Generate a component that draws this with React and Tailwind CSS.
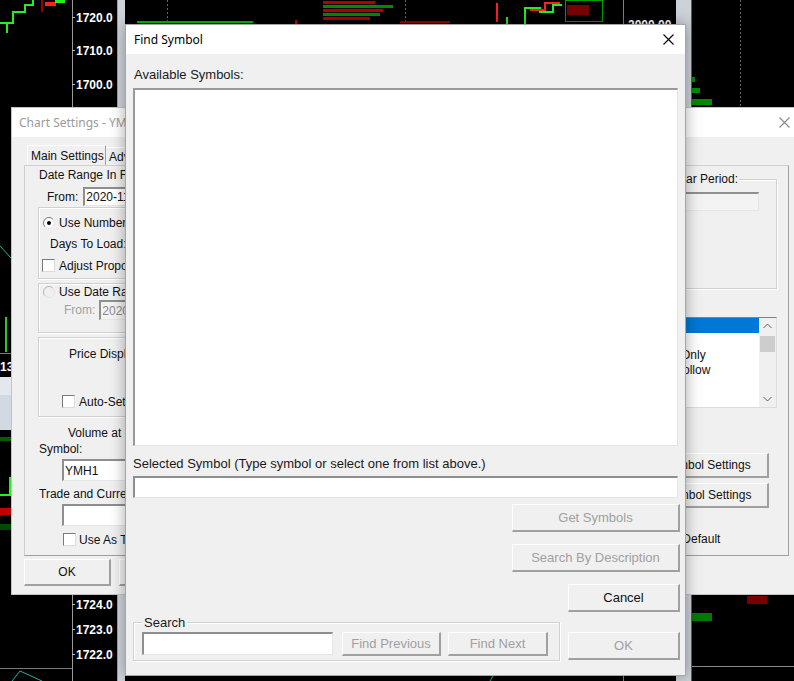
import React from 'react';

const ui = "font-['Liberation_Sans',Arial,sans-serif]";
const caption = "font-['Noto_Sans','Liberation_Sans',sans-serif]";

function CloseX({ color = '#000' }) {
  return (
    <svg width="11" height="11" viewBox="0 0 11 11">
      <path d="M0.5 0.5 L10.5 10.5 M10.5 0.5 L0.5 10.5" stroke={color} strokeWidth="1.1" />
    </svg>
  );
}

function Button({ children, disabled, className = '' }) {
  return (
    <div
      className={`flex items-center justify-center bg-[#f0f0f0] border-t border-l border-t-white border-l-white border-r-2 border-b-2 border-r-[#a0a0a0] border-b-[#a0a0a0] ${
        disabled ? 'text-[#a0a0a0]' : 'text-[#111]'
      } ${className}`}
    >
      {children}
    </div>
  );
}

function Field({ children, disabled, className = '' }) {
  return (
    <div
      className={`flex items-center border-t-2 border-l-2 border-t-[#8f8f8f] border-l-[#8f8f8f] border-r border-b border-r-[#e6e6e6] border-b-[#e6e6e6] ${
        disabled ? 'bg-[#f3f3f3]' : 'bg-white'
      } ${className}`}
    >
      {children}
    </div>
  );
}

function Group({ children, className = '' }) {
  return (
    <div className={`border border-[#d0d0d0] shadow-[inset_1px_1px_0_#fff,1px_1px_0_#fff] ${className}`}>
      {children}
    </div>
  );
}

function Check() {
  return (
    <span className="inline-block w-[13px] h-[13px] shrink-0 bg-white border border-t-[#7a7a7a] border-l-[#7a7a7a] border-r-[#dcdcdc] border-b-[#dcdcdc]" />
  );
}

function Radio({ checked, disabled }) {
  return (
    <svg width="12" height="12" viewBox="0 0 12 12" className="shrink-0">
      <circle cx="6" cy="6" r="5.5" fill={disabled ? '#f0f0f0' : '#fff'} />
      <path d="M2.1 9.9 A5.5 5.5 0 0 1 9.9 2.1" stroke={disabled ? '#b5b5b5' : '#7a7a7a'} fill="none" />
      <path d="M9.9 2.1 A5.5 5.5 0 0 1 2.1 9.9" stroke="#e3e3e3" fill="none" />
      {checked && <circle cx="6" cy="6" r="2" fill="#000" />}
    </svg>
  );
}

function ChartBackdrop() {
  const scale = [
    [17, '1720.0'],
    [50, '1710.0'],
    [84, '1700.0'],
    [604, '1724.0'],
    [629, '1723.0'],
    [654, '1722.0'],
  ];
  const profile = [
    [1, 52, '#b00000'],
    [5, 70, '#008a00'],
    [9, 60, '#b00000'],
    [13, 57, '#008a00'],
    [17, 47, '#b00000'],
  ];
  return (
    <svg className="absolute inset-0" width="794" height="681" viewBox="0 0 794 681">
      <rect width="794" height="681" fill="#000" />

      {/* left pane price scale */}
      <line x1="72.5" y1="0" x2="72.5" y2="681" stroke="#9a9a9a" />
      {scale.map(([y, t]) => (
        <g key={t}>
          <line x1="72" y1={y + 0.5} x2="75" y2={y + 0.5} stroke="#bdbdbd" />
          <text x="76" y={y + 4.5} fill="#fff" fontSize="12" fontWeight="700" fontFamily="Liberation Sans, Arial, sans-serif">
            {t}
          </text>
        </g>
      ))}
      <line x1="0" y1="668.5" x2="72" y2="668.5" stroke="#7a7a7a" />

      {/* left pane bars */}
      <polyline points="0,23 13,23 13,12 25,12 25,5 33,5 33,0" stroke="#22ee22" strokeWidth="2" fill="none" />
      <line x1="7" y1="22" x2="7" y2="33" stroke="#22ee22" strokeWidth="2" />
      <line x1="42" y1="0" x2="42" y2="12" stroke="#9a0000" strokeWidth="2" />
      <rect x="45" y="2" width="11" height="4" fill="#ff2020" />
      <rect x="55" y="0" width="10" height="3" fill="#22ee22" />
      <polyline points="0,246 11,258" stroke="#20b0a0" fill="none" />
      <line x1="6" y1="317" x2="6" y2="352" stroke="#22cc22" strokeWidth="2" />
      <line x1="0" y1="353.5" x2="11" y2="353.5" stroke="#7a7a7a" />
      <text x="0" y="371" fill="#fff" fontSize="12" fontWeight="700" fontFamily="Liberation Sans, Arial, sans-serif">13</text>
      <rect x="0" y="377" width="11" height="18" fill="#e4e7ec" />
      <rect x="0" y="395" width="11" height="35" fill="#d3d9e3" />
      <rect x="0" y="437" width="11" height="4" fill="#006000" />
      <polyline points="0,495 10,495 10,478 11,478" stroke="#22ee22" strokeWidth="2" fill="none" />
      <rect x="0" y="508" width="11" height="7" fill="#c00000" />
      <rect x="0" y="524" width="11" height="6" fill="#004a00" />
      <polyline points="12,681 20,671 42,681" stroke="#20b0a0" fill="none" />

      {/* pane splitter */}
      <rect x="117" y="0" width="8" height="681" fill="#cfd4db" />
      <line x1="117.5" y1="0" x2="117.5" y2="681" stroke="#9aa0a8" />

      {/* middle pane, strip above the dialogs */}
      <line x1="137" y1="22" x2="253" y2="22" stroke="#00c000" strokeWidth="2" />
      <line x1="167.5" y1="0" x2="167.5" y2="24" stroke="#666" strokeDasharray="2 2" />
      <line x1="296" y1="20" x2="296" y2="24" stroke="#cc0000" strokeWidth="2" />
      {profile.map(([y, w, c]) => (
        <rect key={y} x="323" y={y} width={w} height="3" fill={c} />
      ))}
      <line x1="405.5" y1="0" x2="405.5" y2="24" stroke="#666" strokeDasharray="2 2" />
      <line x1="400" y1="22" x2="450" y2="22" stroke="#9a0000" strokeWidth="2" />
      <line x1="497" y1="3" x2="497" y2="22" stroke="#ff2020" strokeWidth="2" />
      <line x1="507" y1="17" x2="507" y2="24" stroke="#22ee22" strokeWidth="2" />
      <polyline points="525,24 525,8 540,8 540,12 553,12 553,5 562,5" stroke="#22ee22" strokeWidth="2" fill="none" />
      <polyline points="530,10 545,10 545,3 560,3" stroke="#ff2020" strokeWidth="2" fill="none" />
      <rect x="567" y="5" width="22" height="10" fill="#7a0000" />
      <rect x="565.5" y="0.5" width="37" height="21" stroke="#00a000" fill="none" />
      <line x1="623.5" y1="0" x2="623.5" y2="24" stroke="#808080" />
      <text x="628" y="29" fill="#fff" fontSize="12" fontWeight="700" fontFamily="Liberation Sans, Arial, sans-serif">2000.00</text>
      <line x1="493" y1="676" x2="490" y2="681" stroke="#20b0a0" />
      <line x1="623.5" y1="676" x2="623.5" y2="681" stroke="#808080" />

      {/* right pane */}
      <rect x="676" y="0" width="15" height="681" fill="#cdd2d9" />
      <line x1="691.5" y1="0" x2="691.5" y2="681" stroke="#5a5e64" />
      <line x1="740.5" y1="0" x2="740.5" y2="107" stroke="#666" strokeDasharray="2 2" />
      <rect x="692" y="77" width="3" height="5" fill="#008a00" />
      <rect x="692" y="88" width="8" height="5" fill="#008a00" />
      <rect x="692" y="99" width="20" height="6" fill="#008a00" />
      <rect x="747" y="596" width="20" height="8" fill="#7a0000" />
      <rect x="692" y="613" width="20" height="8" fill="#007a00" />
      <line x1="692" y1="666.5" x2="794" y2="666.5" stroke="#8a8a8a" />
    </svg>
  );
}

function ChartSettings() {
  return (
    <div className={`absolute left-[11px] top-[107px] w-[790px] h-[488px] flex flex-col bg-[#f0f0f0] border border-[#c4c4c4] text-[12px] text-[#111] ${ui}`}>
      <div className="h-[29px] shrink-0 bg-white flex items-center justify-between pl-[7px] pr-[10px]">
        <span className={`${caption} text-[12px] text-[#9a9a9a]`}>Chart Settings - YMH1 [M]  1 Min  #1</span>
        <CloseX color="#8a8a8a" />
      </div>

      <div className="flex items-end ml-[15px] mt-[8px] h-[20px]">
        <div className="h-[20px] w-[79px] flex items-center pl-[3px] border-t border-l border-r border-t-white border-l-white border-r-[#a0a0a0]">
          Main Settings
        </div>
        <div className="h-[18px] flex items-center pl-[3px] pr-[6px] border-t border-r border-t-white border-r-[#a0a0a0]">
          Advanced Settings
        </div>
      </div>

      <div className="ml-[12px] w-[765px] h-[391px] flex justify-between border border-l-[#cfcfcf] border-t-[#cfcfcf] border-r-[#a0a0a0] border-b-[#a0a0a0]">
        <div className="w-[300px] flex flex-col">
          <div className="ml-[14px] mt-[2px] leading-[14px]">Date Range In File: 2020-11-25 to 2021-01-06</div>
          <div className="flex items-center ml-[22px] mt-[5px] h-[19px] gap-[5px]">
            <span>From:</span>
            <Field className="w-[110px] h-[19px] pl-[1px]">2020-11-25</Field>
          </div>

          <Group className="ml-[13px] mt-[1px] w-[280px] h-[72px] flex flex-col">
            <div className="flex items-center gap-[4px] pl-[4px] mt-[8px] h-[14px]">
              <Radio checked />
              <span>Use Number Of Days To Load</span>
            </div>
            <div className="ml-[11px] mt-[7px] leading-[14px]">Days To Load:</div>
            <div className="flex items-center gap-[4px] pl-[3px] mt-[8px] h-[13px]">
              <Check />
              <span>Adjust Proportionally</span>
            </div>
          </Group>

          <Group className="ml-[13px] mt-[4px] w-[280px] h-[50px] flex flex-col">
            <div className="flex items-center gap-[4px] pl-[4px] mt-[1px] h-[14px]">
              <Radio disabled />
              <span>Use Date Range</span>
            </div>
            <div className="flex items-center gap-[4px] ml-[25px] mt-[1px] h-[20px]">
              <span className="text-[#a0a0a0]">From:</span>
              <Field disabled className="w-[110px] h-[20px] pl-[1px] text-[#8a8a8a]">2020-11-25</Field>
            </div>
          </Group>

          <Group className="ml-[13px] mt-[4px] w-[280px] h-[80px] flex flex-col">
            <div className="ml-[30px] mt-[9px] leading-[14px]">Price Display Settings</div>
            <div className="flex items-center gap-[4px] ml-[23px] mt-[34px] h-[13px]">
              <Check />
              <span>Auto-Set Price Display</span>
            </div>
          </Group>

          <div className="ml-[43px] mt-[9px] leading-[14px]">Volume at Price Settings</div>
          <div className="ml-[14px] mt-[2px] leading-[14px]">Symbol:</div>
          <Field className="ml-[37px] mt-[3px] w-[200px] h-[22px] pl-[1px]">YMH1</Field>
          <div className="ml-[14px] mt-[6px] leading-[14px]">Trade and Currency Symbol:</div>
          <Field className="ml-[37px] mt-[3px] w-[200px] h-[22px]" />
          <div className="flex items-center gap-[3px] ml-[38px] mt-[7px] h-[13px]">
            <Check />
            <span>Use As Trade Symbol</span>
          </div>
        </div>

        <div className="w-[163px] mr-[11px] flex flex-col">
          <Group className="relative ml-[55px] mt-[13px] w-[108px] h-[110px]">
            <span className="absolute -top-[8px] left-[7px] px-[1px] bg-[#f0f0f0] leading-[14px]">Bar Period:</span>
            <Field disabled className="ml-[10px] mt-[12px] w-[79px] h-[19px]" />
          </Group>

          <div className="ml-[39px] mt-[28px] w-[124px] h-[91px] flex bg-white border border-t-[#828282] border-l-[#828282] border-r-[#dcdcdc] border-b-[#dcdcdc]">
            <div className="flex-1 flex flex-col">
              <div className="h-[15px] bg-[#0078d7] text-white pl-[1px] leading-[15px]">Both</div>
              <div className="h-[15px] pl-[1px] leading-[15px]">Last</div>
              <div className="h-[15px] pl-[1px] leading-[15px]">Last Only</div>
              <div className="h-[15px] pl-[1px] leading-[15px]">Bid Follow</div>
            </div>
            <div className="w-[17px] flex flex-col items-center bg-[#f0f0f0]">
              <svg width="9" height="6" viewBox="0 0 9 6" className="mt-[5px]">
                <path d="M0.5 5 L4.5 1 L8.5 5" stroke="#606060" fill="none" />
              </svg>
              <div className="mt-[7px] w-[15px] h-[16px] bg-[#cdcdcd]" />
              <div className="flex-1" />
              <svg width="9" height="6" viewBox="0 0 9 6" className="mb-[5px]">
                <path d="M0.5 1 L4.5 5 L8.5 1" stroke="#606060" fill="none" />
              </svg>
            </div>
          </div>

          <Button className="mt-[45px] w-[155px] h-[25px]">Chart Symbol Settings</Button>
          <Button className="mt-[5px] w-[155px] h-[25px]">Trade Symbol Settings</Button>
          <div className="flex items-center gap-[4px] ml-[4px] mt-[24px] h-[14px]">
            <Check />
            <span>Save As Default</span>
          </div>
        </div>
      </div>

      <div className="flex gap-[8px] ml-[12px] mt-[3px]">
        <Button className="w-[87px] h-[27px]">OK</Button>
        <Button className="w-[87px] h-[27px]">Cancel</Button>
      </div>
    </div>
  );
}

function FindSymbol() {
  return (
    <div className={`absolute left-[125px] top-[24px] w-[561px] h-[652px] flex flex-col bg-[#f0f0f0] border border-[#a5a5a5] shadow-[0_0_14px_rgba(0,0,0,0.35)] ${ui}`}>
      <div className="h-[29px] shrink-0 bg-white flex items-center justify-between pl-[8px] pr-[11px]">
        <span className={`${caption} text-[12px] text-black`}>Find Symbol</span>
        <CloseX />
      </div>

      <div className="flex flex-col pl-[7px] pr-[5px] text-[13px] text-[#1a1a1a]">
        <div className="ml-[1px] mt-[13px] leading-[15px]">Available Symbols:</div>
        <div className="mt-[6px] mr-[2px] h-[358px] bg-white border-t-2 border-l-2 border-t-[#9a9a9a] border-l-[#9a9a9a] border-r border-b border-r-[#e3e3e3] border-b-[#e3e3e3]" />

        <div className="mt-[10px] leading-[15px]">Selected Symbol (Type symbol or select one from list above.)</div>
        <Field className="mt-[5px] mr-[2px] h-[22px]" />

        <Button disabled className="self-end mt-[6px] w-[168px] h-[28px]">Get Symbols</Button>
        <Button disabled className="self-end mt-[12px] w-[168px] h-[28px]">Search By Description</Button>

        <div className="flex justify-between mt-[12px]">
          <Group className="relative mt-[38px] w-[427px] h-[39px] flex pl-[8px] pt-[9px]">
            <span className="absolute -top-[8px] left-[8px] px-[2px] bg-[#f0f0f0] leading-[15px]">Search</span>
            <Field className="w-[191px] h-[23px]" />
            <Button disabled className="ml-[9px] w-[99px] h-[24px]">Find Previous</Button>
            <Button disabled className="ml-[7px] w-[100px] h-[24px]">Find Next</Button>
          </Group>
          <div className="flex flex-col gap-[20px]">
            <Button className="w-[112px] h-[28px]">Cancel</Button>
            <Button disabled className="w-[112px] h-[28px]">OK</Button>
          </div>
        </div>
      </div>
    </div>
  );
}

export default function App() {
  return (
    <div className="relative w-[794px] h-[681px] overflow-hidden bg-black">
      <ChartBackdrop />
      <ChartSettings />
      <FindSymbol />
    </div>
  );
}
